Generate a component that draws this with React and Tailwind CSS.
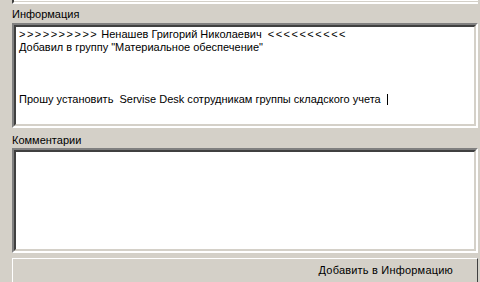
export default function App() {
  const sunken =
    'border-2 border-t-[#808080] border-l-[#808080] border-b-white border-r-white bg-white';
  const inner =
    'h-full w-full border-2 border-t-[#404040] border-l-[#404040] border-b-[#d4d0c8] border-r-[#d4d0c8]';

  return (
    <div
      className="w-[480px] h-[282px] overflow-hidden bg-[#d4d0c8] pl-[12px] pr-[2px] text-[11px] text-black flex flex-col"
      style={{ fontFamily: '"Liberation Sans", Arial, sans-serif' }}
    >
      {/* bottom of the previous text box */}
      <div className="h-[4px] shrink-0 bg-white border-b-2 border-b-white border-l-2 border-l-[#404040]">
        <div className="h-[2px] border-b border-[#d4d0c8]" />
      </div>

      <div className="h-[19px] shrink-0 flex items-center pt-[2px]">Информация</div>

      <div className={`h-[105px] shrink-0 ${sunken}`}>
        <div className={`${inner} px-[3px] pt-[1px] leading-[13px] whitespace-pre`}>
          <div>
            <span className="tracking-[1.5px]">{'>>>>>>>>>>'}</span>
            {' Ненашев Григорий Николаевич  '}
            <span className="tracking-[1.5px]">{'<<<<<<<<<<'}</span>
          </div>
          <div>Добавил в группу "Материальное обеспечение"</div>
          <div>&nbsp;</div>
          <div>&nbsp;</div>
          <div>&nbsp;</div>
          <div className="flex items-center">
            <span>Прошу установить  Servise Desk сотрудникам группы складского учета </span>
            <span className="inline-block w-[1px] h-[11px] bg-black ml-[3px]" />
          </div>
        </div>
      </div>

      <div className="h-[20px] shrink-0 flex items-center pt-[4px]">Комментарии</div>

      <div className={`h-[105px] shrink-0 ${sunken}`}>
        <div className={inner} />
      </div>

      <div className="h-[5px] shrink-0" />

      <div className="h-[28px] shrink-0 border-t border-l border-white border-b border-r border-b-[#404040] border-r-[#404040]">
        <div className="h-[22px] flex items-center justify-end pr-[24px] pt-[1px] tracking-[0.2px]">
          Добавить в Информацию
        </div>
      </div>
    </div>
  );
}
